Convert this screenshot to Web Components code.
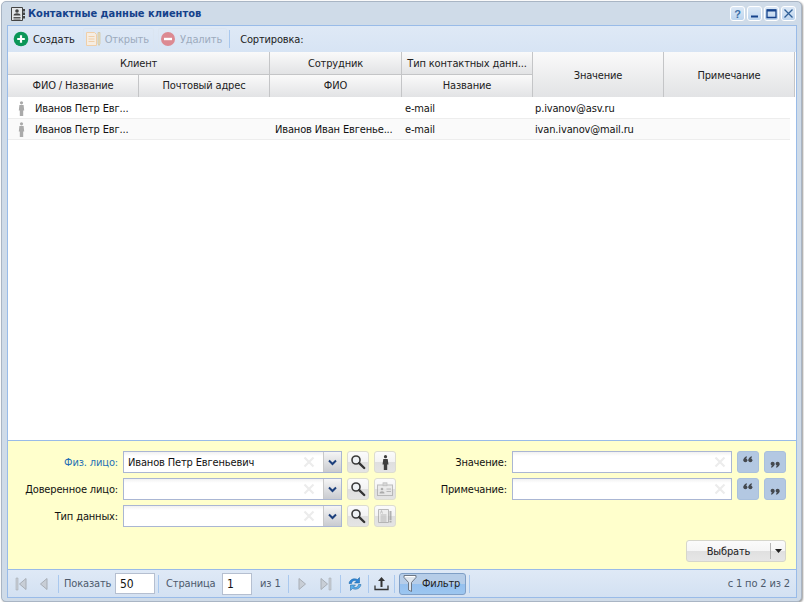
<!DOCTYPE html>
<html>
<head>
<meta charset="utf-8">
<title>Контактные данные клиентов</title>
<style>
html, body { margin: 0; padding: 0; background: #fff; }
body { font: 11px "DejaVu Sans Condensed", "DejaVu Sans", sans-serif; letter-spacing: -0.15px; color: #111; }
</style>
</head>
<body>
<x-window title-text="Контактные данные клиентов">
  <x-toolbar>
    <x-tool-button icon="add">Создать</x-tool-button>
    <x-tool-button icon="open" disabled>Открыть</x-tool-button>
    <x-tool-button icon="remove" disabled>Удалить</x-tool-button>
    <x-sep></x-sep>
    <span>Сортировка:</span>
  </x-toolbar>
  <x-grid>
    <x-grid-row client="Иванов Петр Евг..." type="e-mail" value="p.ivanov@asv.ru"></x-grid-row>
    <x-grid-row client="Иванов Петр Евг..." employee="Иванов Иван Евгенье..." type="e-mail" value="ivan.ivanov@mail.ru"></x-grid-row>
  </x-grid>
  <x-filter-panel>
    <x-field slot="left" label="Физ. лицо:" value="Иванов Петр Евгеньевич" active trigger>
      <x-icon-button icon="search"></x-icon-button>
      <x-icon-button icon="person"></x-icon-button>
    </x-field>
    <x-field slot="left" label="Доверенное лицо:" trigger>
      <x-icon-button icon="search"></x-icon-button>
      <x-icon-button icon="card" faded></x-icon-button>
    </x-field>
    <x-field slot="left" label="Тип данных:" trigger>
      <x-icon-button icon="search"></x-icon-button>
      <x-icon-button icon="doc" faded></x-icon-button>
    </x-field>
    <x-field slot="right" label="Значение:">
      <x-icon-button icon="open-quote" blue></x-icon-button>
      <x-icon-button icon="close-quote" blue></x-icon-button>
    </x-field>
    <x-field slot="right" label="Примечание:">
      <x-icon-button icon="open-quote" blue></x-icon-button>
      <x-icon-button icon="close-quote" blue></x-icon-button>
    </x-field>
    <x-split-button slot="action">Выбрать</x-split-button>
  </x-filter-panel>
  <x-pager></x-pager>
</x-window>

<script>
const icons = {
  add: `<svg width="16" height="16" viewBox="0 0 16 16"><circle cx="8" cy="8" r="7.300" fill="#0b9658"/><path d="M8 4.200v7.600M4.200 8h7.600" stroke="#fff" stroke-width="2.200"/></svg>`,
  remove: `<svg width="16" height="16" viewBox="0 0 16 16"><circle cx="8" cy="8" r="7" fill="#dc8a92"/><path d="M4 8h8" stroke="#fff" stroke-width="2.400"/></svg>`,
  open: `<svg width="16" height="16" viewBox="0 0 16 16"><path d="M1.500 1.500h8l2 2v11h-10z" fill="#f6ede2" stroke="#f0cfa8"/><path d="M3.500 5.500h6M3.500 8h6M3.500 10.500h6" stroke="#f0cfa8"/><path d="M13 1.500h2v11l-1 2-1-2z" fill="#e6dcbc" stroke="#d3c8a4" stroke-width=".8"/></svg>`,
  person: `<svg width="7" height="15" viewBox="0 0 7 15"><circle cx="3.500" cy="1.700" r="1.600" fill="#3f3f3f"/><path d="M1.300 4h4.400l.8 5.500H5.200V15H1.800V9.500H.5z" fill="#3f3f3f"/></svg>`,
  personGrey: `<svg width="7" height="15" viewBox="0 0 7 15"><circle cx="3.500" cy="1.800" r="1.600" fill="#aaa"/><path d="M1.400 4h4.200l.6 5.500H5.200V15H1.800V9.500H.8z" fill="#aaa"/></svg>`,
  search: `<svg width="16" height="16" viewBox="0 0 16 16"><circle cx="6" cy="6" r="4" fill="#eef1f4" stroke="#3a3a3a" stroke-width="1.600"/><path d="M9.200 9.200l5 4.800" stroke="#333" stroke-width="2.400" stroke-linecap="round"/></svg>`,
  card: `<svg width="16" height="14" viewBox="0 0 16 14"><rect x=".5" y="3" width="15" height="10.500" fill="#e8e8e8" stroke="#aaa"/><rect x="6" y=".8" width="4" height="3" fill="#ccc" stroke="#aaa" stroke-width=".7"/><circle cx="5" cy="7" r="1.300" fill="#999"/><path d="M2.500 11.500c0-3 5-3 5 0z" fill="#999"/><path d="M9.500 7h4.500M9.500 9.500h4.500" stroke="#aaa"/></svg>`,
  doc: `<svg width="16" height="16" viewBox="0 0 16 16"><path d="M1.500 1.500h10v13h-10z" fill="#ececec" stroke="#a5a5a5"/><path d="M3.500 7h6M3.500 9h6M3.500 11h6M3.500 13h6" stroke="#a5a5a5"/><path d="M3.500 5.500l1-3 1 3" fill="none" stroke="#a5a5a5" stroke-width=".8"/><path d="M12.500 3h2v9h-2zM12.500 12.800h2v1.700h-2z" fill="#9c9c9c"/></svg>`,
  'open-quote': `<svg width="10" height="12" viewBox="0 0 10 12"><g fill="#44494f"><circle cx="2.400" cy="4.300" r="2"/><path d="M.4 4.300C.4 2.200 1.800.8 3.900.2v1.300C3 1.900 2.600 2.700 2.600 3.600z"/><circle cx="7.400" cy="4.300" r="2"/><path d="M5.400 4.300C5.400 2.200 6.800.8 8.900.2v1.300C8 1.900 7.600 2.700 7.600 3.600z"/></g></svg>`,
  'close-quote': `<svg width="10" height="12" viewBox="0 0 10 12"><g fill="#44494f"><circle cx="2.600" cy="7.700" r="2"/><path d="M4.600 7.700c0 2.100-1.400 3.500-3.500 4.100v-1.300c.9-.4 1.300-1.200 1.300-2.100z"/><circle cx="7.600" cy="7.700" r="2"/><path d="M9.600 7.700c0 2.100-1.400 3.500-3.500 4.100v-1.300c.9-.4 1.300-1.200 1.300-2.100z"/></g></svg>`,
  first: `<svg width="12" height="14" viewBox="0 0 12 14"><path d="M1 1h2v12H1z" fill="#c8ced6" stroke="#a8aeb6" stroke-width=".6"/><path d="M11 1.500v11L4.500 7z" fill="#c8ced6" stroke="#a8aeb6"/></svg>`,
  prev: `<svg width="9" height="14" viewBox="0 0 9 14"><path d="M8 1.500v11L1.500 7z" fill="#c8ced6" stroke="#a8aeb6"/></svg>`,
  next: `<svg width="9" height="14" viewBox="0 0 9 14"><path d="M1 1.500v11L7.500 7z" fill="#c8ced6" stroke="#a8aeb6"/></svg>`,
  last: `<svg width="12" height="14" viewBox="0 0 12 14"><path d="M1 1.500v11L7.500 7z" fill="#c8ced6" stroke="#a8aeb6"/><path d="M9 1h2v12H9z" fill="#c8ced6" stroke="#a8aeb6" stroke-width=".6"/></svg>`,
  refresh: `<svg width="16" height="16" viewBox="0 0 16 16"><path d="M2 7.500C2.500 4 6.500 1.500 10.500 3.500L12.500 1.500V7H7.500L9.500 5C7 3.800 5 5 4.500 7.500z" fill="#2f86d8" stroke="#17609f" stroke-width=".5"/><path d="M14 8.500C13.500 12 9.500 14.500 5.500 12.500L3.500 14.500V9H8.500L6.500 11C9 12.200 11 11 11.500 8.500z" fill="#5aaeea" stroke="#17609f" stroke-width=".5"/></svg>`,
  upload: `<svg width="15" height="15" viewBox="0 0 15 15"><path d="M7.500 1L11 5H8.500V11H6.500V5H4z" fill="#333"/><path d="M1 9.500V13.500H14V9.500" fill="none" stroke="#333" stroke-width="1.300"/></svg>`,
  filter: `<svg width="14" height="20" viewBox="0 0 14 20"><path d="M1 1.500h12v2L8.500 8.500v9l-3-1.500V8.500L1 3.500z" fill="#dfe6ee" stroke="#6d7784"/><path d="M2 2.500h10" stroke="#fff"/></svg>`,
  cardTitle: `<svg width="16" height="16" viewBox="0 0 16 16"><path d="M1.500 1.500h11v13h-11z" fill="#e4e6e8" stroke="#444"/><circle cx="7" cy="5" r="1.800" fill="#444"/><path d="M3.500 9.500c0-3 7-3 7 0z" fill="#444"/><path d="M3.500 11.500h7M3.500 13h7" stroke="#555"/><path d="M13 3h2v2.500h-2zM13 6.500h2V9h-2zM13 10h2v2.500h-2z" fill="#444"/></svg>`
}

class XIcon extends HTMLElement {
    constructor() {
        super();
        this._shadowDOM = this.attachShadow({ mode: 'open' });
        this._shadowDOM.innerHTML = `
        <style>:host { display: inline-flex; align-items: center; justify-content: center; } svg { display: block; }</style>
        ${icons[this.getAttribute('name')] || ''}`
    }
}

class XWindow extends HTMLElement {
    constructor() {
        super();
        this._shadowDOM = this.attachShadow({ mode: 'open' });
        const ctl = (inner) => `<div class="ctl"><svg width="11" height="11" viewBox="0 0 11 11">${inner}</svg></div>`
        this._shadowDOM.innerHTML = `
        <style>
        :host {
            display: flex; flex-direction: column; box-sizing: border-box;
            width: 801px; height: 601px; margin: 1px 0 0 1px;
            padding: 0 4px 3px 5px;
            background: #cfdbe8; border: 1px solid #a9b5c4; border-radius: 5px;
            box-shadow: 1px 1px 2px rgba(0,0,0,.4);
        }
        .title { height: 23px; flex: none; display: flex; align-items: center; }
        .title x-icon { margin: 0 2px 0 3px; }
        .title b { font-size: 11px; letter-spacing: 0; color: #15428b; flex: 1; }
        .ctls { display: flex; gap: 2px; margin: 0 1px 1px 0; }
        .ctl {
            width: 15px; height: 15px; box-sizing: border-box; border: 1px solid #fff; border-radius: 3px;
            background: linear-gradient(#dde9f6, #bcd4ee); display: flex; align-items: center; justify-content: center;
        }
        .body {
            flex: 1; display: flex; flex-direction: column; min-height: 0;
            border: 1px solid #99bbe8; background: #fff;
        }
        </style>
        <div class="title">
            <x-icon name="cardTitle"></x-icon>
            <b>${this.getAttribute('title-text')}</b>
            <div class="ctls">
                ${ctl('<text x="5.500" y="9.500" text-anchor="middle" font-size="11" font-weight="700" font-family="Liberation Sans" fill="#3c6fa8">?</text>')}
                ${ctl('<path d="M2 8.500h7" stroke="#15428b" stroke-width="2"/>')}
                ${ctl('<path d="M1 2h9v7.500H1z" fill="none" stroke="#15428b" stroke-width="1.300"/><path d="M1 2.500h9" stroke="#15428b" stroke-width="2"/>')}
                ${ctl('<path d="M1.500 1.500l8 8M9.500 1.500l-8 8" stroke="#2f5f96" stroke-width="1.300"/>')}
            </div>
        </div>
        <div class="body"><slot></slot></div>`
    }
}

class XToolbar extends HTMLElement {
    constructor() {
        super();
        this._shadowDOM = this.attachShadow({ mode: 'open' });
        this._shadowDOM.innerHTML = `
        <style>
        :host {
            display: flex; align-items: center; flex: none; height: 26px; box-sizing: border-box;
            padding: 0 0 0 3px; background: linear-gradient(#dfe9f6, #d7e4f4); color: #222;
        }
        ::slotted(span) { margin-left: 10px; }
        </style>
        <slot></slot>`
    }
}

class XSep extends HTMLElement {
    constructor() {
        super();
        this._shadowDOM = this.attachShadow({ mode: 'open' });
        this._shadowDOM.innerHTML = `<style>:host { display: block; flex: none; width: 1px; height: 18px; margin-left: 2px; background: #a9c8ee; }</style>`
    }
}

class XToolButton extends HTMLElement {
    constructor() {
        super();
        this._shadowDOM = this.attachShadow({ mode: 'open' });
        this._shadowDOM.innerHTML = `
        <style>
        :host { display: inline-flex; align-items: center; gap: 4px; height: 22px; padding: 0 4px 0 2px; margin-right: 4px; }
        :host([disabled]) { color: #9dabbd; border-radius: 2px; box-shadow: inset 0 0 0 1px #dbe5f1; padding-right: 5px; margin-right: 4px; }
        :host(:nth-of-type(3)) { margin-right: 0; }
        </style>
        <x-icon name="${this.getAttribute('icon')}"></x-icon><slot></slot>`
    }
}

class XGrid extends HTMLElement {
    constructor() {
        super();
        this._shadowDOM = this.attachShadow({ mode: 'open' });
        this._shadowDOM.innerHTML = `
        <style>
        :host { display: flex; flex-direction: column; flex: 1; min-height: 0; background: #fff; }
        .head {
            display: grid; grid-template-columns: 131px 131px 132px 131px 131px 131px;
            grid-template-rows: 23px 22px; width: 787px; flex: none; color: #222;
        }
        .head div {
            display: flex; align-items: center; justify-content: center; white-space: nowrap; overflow: hidden;
            background: linear-gradient(#fafafa, #e2e3e5); box-sizing: border-box;
            border-right: 1px solid #c4c5c7; 
        }
        .head .group { border-bottom: 1px solid #c4c5c7; padding-top: 1px; }
        .head .sub { padding-bottom: 2px; }
        .head .tall { padding-top: 2px; }
        .two { grid-column: span 2; }
        </style>
        <div class="head">
            <div class="group two">Клиент</div>
            <div class="group">Сотрудник</div>
            <div class="group">Тип контактных данн...</div>
            <div class="tall" style="grid-column:5;grid-row:1/3">Значение</div>
            <div class="tall" style="grid-column:6;grid-row:1/3">Примечание</div>
            <div class="sub" style="grid-column:1;grid-row:2">ФИО / Название</div>
            <div class="sub" style="grid-column:2;grid-row:2">Почтовый адрес</div>
            <div class="sub" style="grid-column:3;grid-row:2">ФИО</div>
            <div class="sub" style="grid-column:4;grid-row:2">Название</div>
        </div>
        <slot></slot>`
    }
}

class XGridRow extends HTMLElement {
    constructor() {
        super();
        this._shadowDOM = this.attachShadow({ mode: 'open' });
        const a = (n) => this.getAttribute(n) || '';
        this._shadowDOM.innerHTML = `
        <style>
        :host {
            display: grid; grid-template-columns: 131px 131px 132px 131px 131px; width: 782px;
            height: 22px; box-sizing: border-box; border-bottom: 1px solid #ededed; align-items: center;
            color: #111; flex: none; padding-top: 1px;
        }
        :host(:nth-of-type(even)) { background: #fafafa; height: 21px; padding-top: 0; }
        div { white-space: nowrap; overflow: hidden; }
        .c1 { display: flex; align-items: center; padding-left: 10px; gap: 10px; }
        .c3 { padding-left: 5px; }
        .c4 { padding-left: 3px; }
        .c5 { padding-left: 2px; }
        </style>
        <div class="c1"><x-icon name="personGrey"></x-icon><span>${a('client')}</span></div>
        <div></div>
        <div class="c3">${a('employee')}</div>
        <div class="c4">${a('type')}</div>
        <div class="c5">${a('value')}</div>`
    }
}

class XFilterPanel extends HTMLElement {
    constructor() {
        super();
        this._shadowDOM = this.attachShadow({ mode: 'open' });
        this._shadowDOM.innerHTML = `
        <style>
        :host {
            display: block; flex: none; height: 130px; box-sizing: border-box;
            background: #ffffcc; border-top: 1px solid #99bbe8; border-bottom: 1px solid #99bbe8;
            padding: 10px 10px 0 0;
        }
        .cols { display: flex; height: 76px; }
        .col { display: flex; flex-direction: column; gap: 5px; }
        .left { width: 402px; --label-width: 110px; }
        .right { --label-width: 97px; --input-width: 220px; }
        .action { display: flex; justify-content: flex-end; margin-top: 13px; }
        </style>
        <div class="cols">
            <div class="col left"><slot name="left"></slot></div>
            <div class="col right"><slot name="right"></slot></div>
        </div>
        <div class="action"><slot name="action"></slot></div>`
    }
}

class XField extends HTMLElement {
    constructor() {
        super();
        this._shadowDOM = this.attachShadow({ mode: 'open' });
        const trigger = this.hasAttribute('trigger');
        this._shadowDOM.innerHTML = `
        <style>
        :host { display: flex; align-items: center; height: 22px; }
        label { width: var(--label-width); text-align: right; margin-right: 5px; white-space: nowrap; color: #111; flex: none; }
        :host([active]) label { color: #1f6fb5; }
        .box {
            width: var(--input-width, 219px); height: 22px; box-sizing: border-box; flex: none;
            border: 1px solid #aab6d3; background: linear-gradient(#f1f1f1, #fff 4px); display: flex; align-items: center;
        }
        .val { flex: 1; padding-left: 4px; white-space: nowrap; color: #111; }
        .clear { width: 12px; height: 12px; margin-right: ${trigger ? '8px' : '5px'}; }
        .trigger {
            width: 17px; height: 20px; flex: none; border-left: 1px solid #c9c9c9;
            background: linear-gradient(#f5f5f5, #c9cbd0); display: flex; align-items: center; justify-content: center;
        }
        .btns { display: flex; gap: 5px; margin-left: 5px; }
        </style>
        <label>${this.getAttribute('label')}</label>
        <div class="box">
            <div class="val">${this.getAttribute('value') || ''}</div>
            <svg class="clear" viewBox="0 0 12 12"><path d="M1.500 1.500l9 9M10.500 1.500l-9 9" stroke="#ececec" stroke-width="2.200"/></svg>
            ${trigger ? `<div class="trigger"><svg width="9" height="7" viewBox="0 0 9 7"><path d="M1 1.500l3.500 3.500L8 1.500" fill="none" stroke="#1c3f7c" stroke-width="2"/></svg></div>` : ''}
        </div>
        <div class="btns"><slot></slot></div>`
    }
}

class XIconButton extends HTMLElement {
    constructor() {
        super();
        this._shadowDOM = this.attachShadow({ mode: 'open' });
        this._shadowDOM.innerHTML = `
        <style>
        :host {
            display: inline-flex; align-items: center; justify-content: center; width: 22px; height: 22px;
            box-sizing: border-box; border: 1px solid #dcdcd0; border-radius: 3px;
            background: linear-gradient(#fbfbfb 0, #f3f3f3 50%, #dfdfdf 50%, #e4e4e4 100%);
        }
        :host([faded]) x-icon { opacity: .75; }
        :host([blue]) { background: #b3c8e2; border-color: #a9c0dc; }
        </style>
        <x-icon name="${this.getAttribute('icon')}"></x-icon>`
    }
}

class XSplitButton extends HTMLElement {
    constructor() {
        super();
        this._shadowDOM = this.attachShadow({ mode: 'open' });
        this._shadowDOM.innerHTML = `
        <style>
        :host {
            display: flex; align-items: center; width: 100px; height: 22px; box-sizing: border-box;
            border: 1px solid #d6d6cc; border-radius: 3px; color: #222;
            background: linear-gradient(#fbfbfb 0, #f5f5f5 50%, #e0e0e0 50%, #e6e6e6 100%);
        }
        .txt { width: 83px; text-align: center; }
        .bar { width: 1px; height: 16px; background: #b5b5b5; }
        .arr { flex: 1; display: flex; justify-content: center; }
        </style>
        <div class="txt"><slot></slot></div>
        <div class="bar"></div>
        <div class="arr"><svg width="7" height="4" viewBox="0 0 7 4"><path d="M0 0h7L3.500 4z" fill="#222"/></svg></div>`
    }
}

class XPager extends HTMLElement {
    constructor() {
        super();
        this._shadowDOM = this.attachShadow({ mode: 'open' });
        this._shadowDOM.innerHTML = `
        <style>
        :host {
            display: flex; align-items: center; flex: none; height: 27px; box-sizing: border-box;
            padding: 0 6px 0 0; background: linear-gradient(#dfe9f6, #d3e1f2); color: #4d5a6c;
        }
        .ib { display: flex; justify-content: center; flex: none; }
        .s { width: 1px; height: 18px; background: #a9c8ee; flex: none; }
        .inp {
            height: 21px; box-sizing: border-box; border: 1px solid #b5bfd0; background: #fff; color: #111;
            font-size: 12px; padding-left: 4px; display: flex; align-items: center; flex: none;
        }
        .filter {
            display: flex; align-items: center; width: 67px; height: 22px; box-sizing: border-box; flex: none;
            margin: 0 3px 0 4px; border: 1px solid #7f9fc6; border-radius: 3px; color: #222; padding-left: 3px; gap: 5px;
            background: linear-gradient(#b6cde8 0, #b6cde8 50%, #95c0ee 50%, #9cc6f0 100%);
        }
        .right { margin-left: auto; }
        </style>
        <span class="ib" style="width:16px;margin-left:5px">${icons.first}</span>
        <span class="ib" style="width:14px;margin-left:7px">${icons.prev}</span>
        <span class="s" style="margin-left:8px"></span>
        <span style="margin-left:5px;width:46px">Показать</span>
        <div class="inp" style="width:40px;margin-left:5px">50</div>
        <span class="s" style="margin-left:3px"></span>
        <span style="margin-left:7px;width:50px">Страница</span>
        <div class="inp" style="width:30px;height:22px;margin-left:6px">1</div>
        <span style="margin-left:8px;width:21px">из 1</span>
        <span class="s" style="margin-left:7px"></span>
        <span class="ib" style="width:14px;margin-left:6px">${icons.next}</span>
        <span class="ib" style="width:14px;margin-left:10px">${icons.last}</span>
        <span class="s" style="margin-left:7px"></span>
        <span class="ib" style="width:27px">${icons.refresh}</span>
        <span class="s"></span>
        <span class="ib" style="width:25px">${icons.upload}</span>
        <span class="s"></span>
        <div class="filter">${icons.filter}<span>Фильтр</span></div>
        <span class="s"></span>
        <span class="right">с 1 по 2 из 2</span>`
    }
}

window.customElements.define('x-icon', XIcon)
window.customElements.define('x-window', XWindow)
window.customElements.define('x-toolbar', XToolbar)
window.customElements.define('x-sep', XSep)
window.customElements.define('x-tool-button', XToolButton)
window.customElements.define('x-grid', XGrid)
window.customElements.define('x-grid-row', XGridRow)
window.customElements.define('x-filter-panel', XFilterPanel)
window.customElements.define('x-field', XField)
window.customElements.define('x-icon-button', XIconButton)
window.customElements.define('x-split-button', XSplitButton)
window.customElements.define('x-pager', XPager)
</script>
</body>
</html>
